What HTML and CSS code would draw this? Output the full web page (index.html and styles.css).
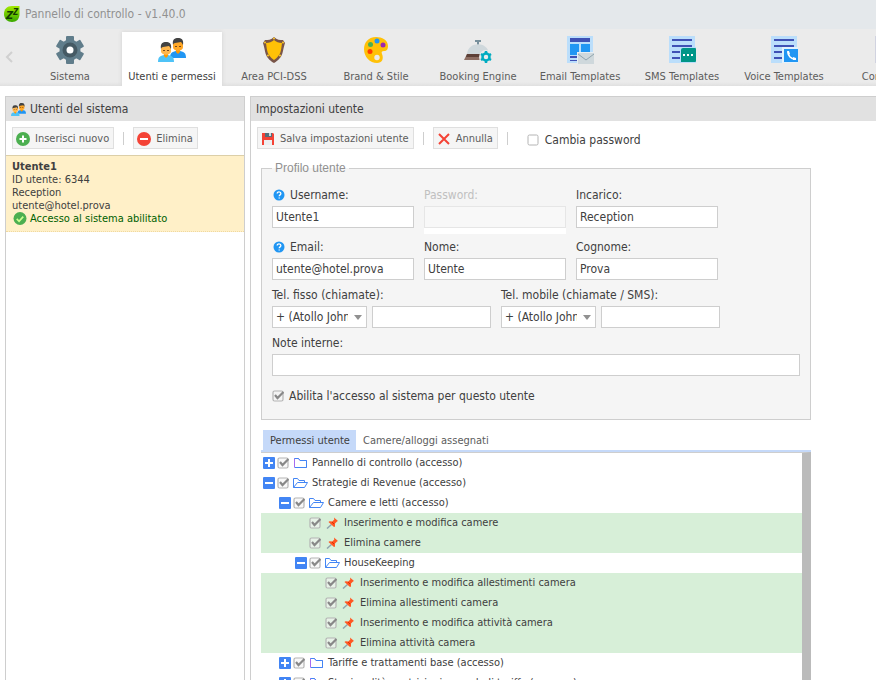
FILE: index.html
```
<!DOCTYPE html>
<html lang="it">
<head>
<meta charset="utf-8">
<title>Pannello di controllo</title>
<link rel="stylesheet" href="styles.css">
</head>
<body>
<svg class="sprite" aria-hidden="true">
  <symbol id="users" viewBox="0 0 28 24">
    <path d="M12 20c0-5 2-7 8-7s8 2 8 7z" fill="#2196f3"/>
    <path d="M18 12h4v2l-2 2-2-2z" fill="#ff9800"/>
    <path d="M15 5c0-5 10-5 10 0v4c0 5-10 5-10 0z" fill="#ffa726"/>
    <path d="M15 7C14 1 17 0 20 0s6 1 5 7c-1-2-2-3-2-3l-6 1c-1 0-2 1-2 2z" fill="#424242"/>
    <path d="M17 8h2v1h-2zM21 8h2v1h-2z" fill="#784719"/>
    <path d="M0 24c0-5 2-7 8-7s8 2 8 7z" fill="#4fc3f7"/>
    <path d="M6 16h4v2l-2 2-2-2z" fill="#ff9800"/>
    <path d="M3 9c0-5 10-5 10 0v4c0 5-10 5-10 0z" fill="#ffb74d"/>
    <path d="M3 11C2 5 5 4 8 4s6 1 5 7c-1-2-2-3-2-3l-6 1c-1 0-2 1-2 2z" fill="#424242"/>
    <path d="M5 12h2v1H5zM9 12h2v1H9z" fill="#784719"/>
  </symbol>
  <symbol id="page" viewBox="0 0 28 28">
    <path d="M1 0h26v27H1z" fill="#bbdefb"/>
    <path d="M4 3h20v2H4zM4 9h20v2H4zM4 15h20v2H4zM4 21h10v2H4z" fill="#3f51b5"/>
  </symbol>
  <symbol id="plus" viewBox="0 0 12 12">
    <rect width="12" height="12" rx="1" fill="#4285f4"/>
    <path d="M6 2v8M2 6h8" stroke="#fff" stroke-width="2"/>
  </symbol>
  <symbol id="minus" viewBox="0 0 12 12">
    <rect width="12" height="12" rx="1" fill="#4285f4"/>
    <path d="M2 6h8" stroke="#fff" stroke-width="2"/>
  </symbol>
  <symbol id="folder" viewBox="0 0 15 12">
    <path d="M1.500 10.500v-9h4l1.500 2h6.500v7z" fill="none" stroke="#a66cf0"/>
    <path d="M2 10.500h11.500v-7H7l-1.500-2H1.500" fill="none" stroke="#4285f4"/>
  </symbol>
  <symbol id="open" viewBox="0 0 15 12">
    <path d="M.5 10.500v-9h4l1.500 2h5.500v2M.5 10.500l4-5h10l-3 5z" fill="none" stroke="#4285f4"/>
  </symbol>
  <symbol id="pin" viewBox="0 0 12 12">
    <path d="M5 7.500L.5 11.500" stroke="#90a4ae" stroke-width="1.500"/>
    <path d="M7.500.5l4 3.500-1 .5-2 2v3l-1 .5-5.500-5 1-.8 2.800.2 2-2z" fill="#ff5722"/>
    <path d="M5.500 5l2 2" stroke="#dd2c00"/>
  </symbol>
  <symbol id="help" viewBox="0 0 12 12">
    <circle cx="6" cy="6" r="5.500" fill="#2196f3"/>
    <path d="M4.200 4.600c0-2.400 3.700-2.200 3.700 0C7.900 6 6.200 5.800 6.200 7.300M6.200 8.400v1.200" fill="none" stroke="#fff" stroke-width="1.300"/>
  </symbol>
</svg>

<header class="titlebar">
  <svg class="logo" viewBox="0 0 16 16" aria-hidden="true">
    <defs><linearGradient id="leaf" x2="0" y2="1"><stop stop-color="#a4ea00"/><stop offset="1" stop-color="#38a800"/></linearGradient></defs>
    <path d="M0 8C0 3 3 0 8 0h7.500v8c0 5-3 8-7.500 8S0 13 0 8z" fill="url(#leaf)"/>
    <text class="logo-text" x="2" y="13" font-size="11">Z</text>
    <text class="logo-text" x="9" y="9" font-size="8">Z</text>
  </svg>
  <span>Pannello di controllo - v1.40.0</span>
</header>

<nav class="nav">
  <button class="nav-prev" aria-label="Indietro"><svg viewBox="0 0 8 12" width="8" height="12"><path d="M7 1L2 6l5 5" fill="none" stroke="#d0d0d0" stroke-width="2"/></svg></button>
  <button class="nav-tab">
    <svg viewBox="0 0 28 28"><g fill="#607d8b"><circle cx="14" cy="14" r="10.500"/><rect x="10" y="0" width="8" height="28" rx="1"/><rect x="10" y="0" width="8" height="28" rx="1" transform="rotate(60 14 14)"/><rect x="10" y="0" width="8" height="28" rx="1" transform="rotate(120 14 14)"/></g><circle cx="14" cy="14" r="7.500" fill="#455a64"/><circle cx="14" cy="14" r="3.500" fill="#fff"/></svg>
    <span>Sistema</span>
  </button>
  <button class="nav-tab active"><svg viewBox="0 0 28 28"><use href="#users" y="2" width="28" height="24"/></svg><span>Utenti e permessi</span></button>
  <button class="nav-tab">
    <svg viewBox="0 0 28 28"><path d="M14 1c3 3 6 3 9 3l2 3c-3 9-1 14-11 20C4 21 6 16 3 7l2-3c3 0 6 0 9-3z" fill="#795548"/><path d="M14 4c2 2 5 3 8 3-1 8-1 12-8 17C7 19 7 15 6 7c3 0 6-1 8-3z" fill="#ffc107"/><g fill="#ffca28"><circle cx="14" cy="2.500" r="1"/><circle cx="5" cy="6.500" r="1"/><circle cx="23" cy="6.500" r="1"/><circle cx="8" cy="19.500" r="1"/><circle cx="20" cy="19.500" r="1"/></g></svg>
    <span>Area PCI-DSS</span>
  </button>
  <button class="nav-tab">
    <svg viewBox="0 0 28 28"><path d="M14 1C6 1 2 7 2 13c0 8 6 14 13 14 5 0 7-4 5-9-1-2 0-3 2-3 3 0 4-2 4-5 0-6-6-9-12-9z" fill="#ffc107"/><circle cx="15" cy="21.500" r="2.700" fill="#ebebeb"/><circle cx="8" cy="15.500" r="2.500" fill="#ff3d00"/><circle cx="8.500" cy="8.500" r="2.500" fill="#4caf50"/><circle cx="15" cy="5" r="2.500" fill="#2196f3"/><circle cx="21" cy="9" r="2.500" fill="#9c27b0"/></svg>
    <span>Brand &amp; Stile</span>
  </button>
  <button class="nav-tab">
    <svg viewBox="0 0 28 28"><path d="M11 4h6v2h-2v4h-2V6h-2z" fill="#78909c"/><path d="M3 18C4 5 24 5 25 18z" fill="#cfd8dc"/><path d="M3 18h16v6H0z" fill="#8d6e63"/><path d="M3 18h14v3H2z" fill="#5d4037"/><circle cx="22" cy="21" r="7" fill="#ebebeb"/><g stroke="#00acc1" fill="none"><path d="M22 15v12M17 18l10 6M17 24l10-6" stroke-width="2.500"/><circle cx="22" cy="21" r="3.500" stroke-width="2.500" fill="#ebebeb"/></g></svg>
    <span>Booking Engine</span>
  </button>
  <button class="nav-tab">
    <svg viewBox="0 0 28 28"><path d="M1 0h26v27H1z" fill="#bbdefb"/><path d="M4 2h20v4H4zM4 20h7v2H4zM4 24h7v1H4z" fill="#3f51b5"/><path d="M4 8h9v11H4zM15 8h9v8h-9z" fill="#2196f3"/><path d="M11 16h17v12H11z" fill="#e8eef2"/><path d="M12 17h16v11H12z" fill="#cfd8dc"/><path d="M12 18l8 6 8-6" fill="none" stroke="#90a4ae"/></svg>
    <span>Email Templates</span>
  </button>
  <button class="nav-tab">
    <svg viewBox="0 0 28 28"><use href="#page"/><path d="M12 11h16v16H12z" fill="#bbdefb"/><path d="M13 14q0-2 2-2h12q1 0 1 1v12q0 1-1 1H13z" fill="#009688"/><path d="M15 18h2v2h-2zM19 18h2v2h-2zM23 18h2v2h-2z" fill="#fff"/></svg>
    <span>SMS Templates</span>
  </button>
  <button class="nav-tab">
    <svg viewBox="0 0 28 28"><use href="#page"/><path d="M12 11h16v16H12z" fill="#e3f2fd"/><path d="M14 13h14v13H14z" fill="#2196f3"/><path d="M18 16c0 4 3 7 7 7" fill="none" stroke="#fff" stroke-width="1.500"/><path d="M17 15h2l1 3-2 1zM23 21l3 1v2h-3z" fill="#fff"/></svg>
    <span>Voice Templates</span>
  </button>
  <button class="nav-tab">
    <svg viewBox="0 0 28 28"><path d="M3 0h24v27H3z" fill="#d1d3e0"/><path d="M6 4h18M6 10h18M6 16h18" stroke="#7986cb" stroke-width="2"/></svg>
    <span>Contenuti</span>
  </button>
</nav>

<main class="workspace">
  <section class="panel users">
    <h2 class="panel-title"><svg width="15" height="13"><use href="#users"/></svg>Utenti del sistema</h2>
    <div class="toolbar">
      <button class="btn"><svg width="14" height="14" viewBox="0 0 14 14"><circle cx="7" cy="7" r="7" fill="#4caf50"/><path d="M7 3.500v7M3.500 7h7" stroke="#fff" stroke-width="2"/></svg>Inserisci nuovo</button>
      <span class="sep"></span>
      <button class="btn"><svg width="14" height="14" viewBox="0 0 14 14"><circle cx="7" cy="7" r="7" fill="#f44336"/><path d="M3 7h8" stroke="#fff" stroke-width="2"/></svg>Elimina</button>
    </div>
    <div class="user-card">
      <strong>Utente1</strong>
      <span>ID utente: 6344</span>
      <span>Reception</span>
      <span>utente@hotel.prova</span>
      <span class="enabled"><svg width="14" height="13" viewBox="0 0 14 14"><circle cx="7" cy="7" r="7" fill="#4caf50"/><path d="M3.500 7.500L6 10l4.500-5" fill="none" stroke="#ccff90" stroke-width="1.800"/></svg>Accesso al sistema abilitato</span>
    </div>
  </section>

  <section class="panel settings">
    <h2 class="panel-title">Impostazioni utente</h2>
    <div class="toolbar">
      <button class="btn"><svg width="14" height="14" viewBox="0 0 14 14"><path d="M1 1h11l1 1v11H1z" fill="#f44336"/><path d="M4 1h7v4H4z" fill="#546e7a"/><path d="M8 1h2v3H8z" fill="#cfd8dc"/><path d="M3 8h8v5H3z" fill="#eceff1"/></svg>Salva impostazioni utente</button>
      <span class="sep"></span>
      <button class="btn"><svg width="14" height="14" viewBox="0 0 14 14"><path d="M2 2l10 10M12 2L2 12" stroke="#f44336" stroke-width="2"/></svg>Annulla</button>
      <span class="sep"></span>
      <label class="check change-password"><input type="checkbox" class="box">Cambia password</label>
    </div>

    <div class="content">
      <fieldset class="profile">
        <legend>Profilo utente</legend>
        <div class="row account">
          <div class="field"><label for="username"><svg width="12" height="12"><use href="#help"/></svg>Username:</label><input id="username" type="text" value="Utente1"></div>
          <div class="field muted"><label for="password">Password:</label><input id="password" type="password" disabled><div class="strength"></div></div>
          <div class="field"><label for="role">Incarico:</label><input id="role" type="text" value="Reception"></div>
        </div>
        <div class="row">
          <div class="field"><label for="email"><svg width="12" height="12"><use href="#help"/></svg>Email:</label><input id="email" type="text" value="utente@hotel.prova"></div>
          <div class="field"><label for="name">Nome:</label><input id="name" type="text" value="Utente"></div>
          <div class="field"><label for="surname">Cognome:</label><input id="surname" type="text" value="Prova"></div>
        </div>
        <div class="row phones">
          <div class="field"><label for="phone">Tel. fisso (chiamate):</label><div class="phone"><select aria-label="Prefisso fisso"><option>+ (Atollo Johnston)</option></select><input id="phone" type="tel"></div></div>
          <div class="field"><label for="mobile">Tel. mobile (chiamate / SMS):</label><div class="phone"><select aria-label="Prefisso mobile"><option>+ (Atollo Johnston)</option></select><input id="mobile" type="tel"></div></div>
        </div>
        <div class="field"><label for="notes">Note interne:</label><input id="notes" type="text"></div>
        <label class="check access"><input type="checkbox" class="box" checked>Abilita l'accesso al sistema per questo utente</label>
      </fieldset>

      <div class="tabs">
        <button class="tab selected">Permessi utente</button>
        <button class="tab">Camere/alloggi assegnati</button>
      </div>
      <ul class="tree">
        <li class="level-0"><button class="toggle" aria-label="Espandi"><svg><use href="#plus"/></svg></button><label><input type="checkbox" class="box" checked><svg class="kind"><use href="#folder"/></svg>Pannello di controllo (accesso)</label></li>
        <li class="level-0"><button class="toggle" aria-label="Comprimi"><svg><use href="#minus"/></svg></button><label><input type="checkbox" class="box" checked><svg class="kind"><use href="#open"/></svg>Strategie di Revenue (accesso)</label></li>
        <li class="level-1"><button class="toggle" aria-label="Comprimi"><svg><use href="#minus"/></svg></button><label><input type="checkbox" class="box" checked><svg class="kind"><use href="#open"/></svg>Camere e letti (accesso)</label></li>
        <li class="level-2 leaf"><label><input type="checkbox" class="box" checked><svg class="kind"><use href="#pin"/></svg>Inserimento e modifica camere</label></li>
        <li class="level-2 leaf"><label><input type="checkbox" class="box" checked><svg class="kind"><use href="#pin"/></svg>Elimina camere</label></li>
        <li class="level-2"><button class="toggle" aria-label="Comprimi"><svg><use href="#minus"/></svg></button><label><input type="checkbox" class="box" checked><svg class="kind"><use href="#open"/></svg>HouseKeeping</label></li>
        <li class="level-3 leaf"><label><input type="checkbox" class="box" checked><svg class="kind"><use href="#pin"/></svg>Inserimento e modifica allestimenti camera</label></li>
        <li class="level-3 leaf"><label><input type="checkbox" class="box" checked><svg class="kind"><use href="#pin"/></svg>Elimina allestimenti camera</label></li>
        <li class="level-3 leaf"><label><input type="checkbox" class="box" checked><svg class="kind"><use href="#pin"/></svg>Inserimento e modifica attività camera</label></li>
        <li class="level-3 leaf"><label><input type="checkbox" class="box" checked><svg class="kind"><use href="#pin"/></svg>Elimina attività camera</label></li>
        <li class="level-1"><button class="toggle" aria-label="Espandi"><svg><use href="#plus"/></svg></button><label><input type="checkbox" class="box" checked><svg class="kind"><use href="#folder"/></svg>Tariffe e trattamenti base (accesso)</label></li>
        <li class="level-1"><button class="toggle" aria-label="Espandi"><svg><use href="#plus"/></svg></button><label><input type="checkbox" class="box" checked><svg class="kind"><use href="#folder"/></svg>Stagionalità, restrizioni e cond. di tariffa (accesso)</label></li>
      </ul>
    </div>
  </section>
</main>
</body>
</html>
```
FILE: styles.css
```
* { box-sizing: border-box; }

body {
  display: flex;
  flex-direction: column;
  height: 100vh;
  margin: 0;
  overflow: hidden;
  background: #fff;
  color: #404040;
  font: 12px/14px "DejaVu Sans Condensed", "Noto Sans", sans-serif;
}

button, input, select { margin: 0; font: inherit; color: inherit; }
button { cursor: pointer; }
svg { flex: none; }

.sprite { display: none; }

.titlebar {
  display: flex;
  flex: none;
  align-items: center;
  gap: 5px;
  height: 29px;
  padding: 0 4px 2px;
  background: #e4e8eb;
  color: #919191;
}
.logo { width: 16px; height: 16px; }
.logo-text { fill: #143c00; font-weight: bold; font-style: italic; }

.nav {
  display: flex;
  flex: none;
  gap: 2px;
  height: 57px;
  padding-top: 3px;
  overflow: hidden;
  background: linear-gradient(#ebebeb 53px, #e0e0e0);
}
.nav-prev {
  flex: none;
  width: 18px;
  padding: 0 0 2px;
  border: 0;
  background: none;
}
.nav-tab {
  display: flex;
  flex: none;
  flex-direction: column;
  align-items: center;
  gap: 6px;
  width: 100px;
  padding: 4px 0 0;
  border: 0;
  background: none;
  color: #5c5c5c;
  font-size: 11px;
  white-space: nowrap;
}
.nav-tab svg { width: 28px; height: 28px; }
.nav-tab.active { background: #fff; color: #404040; box-shadow: 0 0 4px #d0d0d0; }

.workspace {
  display: flex;
  flex: 1;
  gap: 5px;
  min-height: 0;
  padding: 10px 0 0 5px;
}
.panel {
  display: flex;
  flex-direction: column;
  min-height: 0;
  border: 1px solid #cecece;
  border-bottom: 0;
}
.users { flex: none; width: 240px; }
.settings { flex: 1; min-width: 0; border-right: 0; }

.panel-title {
  display: flex;
  flex: none;
  align-items: center;
  gap: 4px;
  height: 24px;
  margin: 0;
  padding: 0 5px;
  background: #e1e1e1;
  font-size: 12px;
  font-weight: normal;
}

.toolbar {
  display: flex;
  flex: none;
  align-items: center;
  gap: 9px;
  height: 34px;
  padding: 0 6px;
}
.btn {
  display: flex;
  align-items: center;
  gap: 5px;
  height: 22px;
  padding: 1px 4px 0 3px;
  border: 1px solid #dfdfdf;
  background: #f5f5f5;
  color: #5c5c5c;
  font-size: 11px;
  white-space: nowrap;
}
.sep { width: 1px; height: 13px; background: #cecece; }

.check { display: flex; align-items: center; gap: 6px; }
.change-password { margin: 4px 0 0 10px; }

.box {
  flex: none;
  width: 12px;
  height: 12px;
  appearance: none;
  background: url("data:image/svg+xml,%3Csvg xmlns='http://www.w3.org/2000/svg' viewBox='0 0 12 12'%3E%3Crect x='1' y='1' width='10' height='10' rx='1.5' fill='%23fff' stroke='%23b4b4b4'/%3E%3C/svg%3E");
}
.box:checked {
  background: url("data:image/svg+xml,%3Csvg xmlns='http://www.w3.org/2000/svg' viewBox='0 0 12 12'%3E%3Crect x='1' y='1' width='10' height='10' rx='1.5' fill='%23f4f4f4' fill-opacity='.6' stroke='%23b4b4b4' stroke-width='1.2'/%3E%3Cpath d='M3 5l2.500 3L11.500 2' fill='none' stroke='%23888' stroke-width='2.200'/%3E%3C/svg%3E");
}

.user-card {
  display: flex;
  flex-direction: column;
  padding: 4px 6px 6px;
  border-top: 1px solid #dccfa8;
  border-bottom: 1px dotted #f0d9a0;
  background: #fff0c8;
  font-size: 11px;
  line-height: 13px;
}
.enabled { display: flex; align-items: center; gap: 3px; padding-left: 1px; color: #006000; }

.content {
  display: flex;
  flex: 1;
  flex-direction: column;
  width: 100%;
  max-width: 570px;
  min-height: 0;
  padding: 6px 10px 0;
}

.profile {
  flex: none;
  min-width: 0;
  margin: 0 0 10px;
  padding: 13px 10px 16px;
  border: 1px solid #cecece;
  background: #f5f5f5;
}
.profile legend {
  padding: 0 3px;
  color: #919191;
  font-family: "Liberation Sans", sans-serif;
}
.row { display: grid; grid-template-columns: repeat(3, 142px); gap: 10px; margin-bottom: 8px; }
.row.account { margin-bottom: 6px; }
.row.phones { grid-template-columns: repeat(2, 219px); }
.field label { display: flex; align-items: center; gap: 5px; margin-bottom: 4px; }
.field label svg { margin-left: 1px; }
.field input, .field select {
  display: block;
  width: 100%;
  min-width: 0;
  height: 22px;
  padding: 0 3px;
  border: 1px solid #cecece;
  border-radius: 0;
  background: #fff;
}
.field.muted { color: #c0c0c0; }
.field.muted input { border-color: #e6e6e6; background: #f8f8f8; }
.strength { height: 6px; background: #fff; }
.phone { display: grid; grid-template-columns: 95px 1fr; gap: 5px; }
.field select {
  padding: 0 18px 0 3px;
  appearance: none;
  background: #fff url("data:image/svg+xml,%3Csvg xmlns='http://www.w3.org/2000/svg' viewBox='0 0 8 5'%3E%3Cpath d='M0 0h8L4 5z' fill='%23919191'/%3E%3C/svg%3E") no-repeat right 4px center / 8px 5px;
}
.access { margin-top: 13px; gap: 5px; }

.tabs { display: flex; flex: none; padding-left: 2px; border-bottom: 2px solid #c5d9f9; }
.tab {
  height: 20px;
  padding: 2px 6px 0 7px;
  border: 0;
  background: none;
  color: #5c5c5c;
  font-size: 11px;
}
.tab.selected { background: #c5d9f9; color: #404040; }

.tree {
  flex: 1;
  min-height: 0;
  margin: 0;
  padding: 0;
  overflow: hidden;
  border-top: 1px solid #cecece;
  border-right: 9px solid #bbb;
  list-style: none;
  font-size: 11px;
}
.tree li { display: flex; align-items: center; height: 20px; gap: 2px; white-space: nowrap; }
.tree label { display: flex; align-items: center; gap: 4px; }
.toggle { width: 12px; height: 12px; padding: 0; border: 0; background: none; }
.toggle svg { display: block; width: 12px; height: 12px; }
.kind { width: 15px; height: 12px; }
.level-0 { padding-left: 2px; }
.level-1 { padding-left: 18px; }
.level-2 { padding-left: 34px; }
.tree .leaf { background: #d7efd8; }
.level-2.leaf { padding-left: 48px; }
.level-3.leaf { padding-left: 64px; }
```
